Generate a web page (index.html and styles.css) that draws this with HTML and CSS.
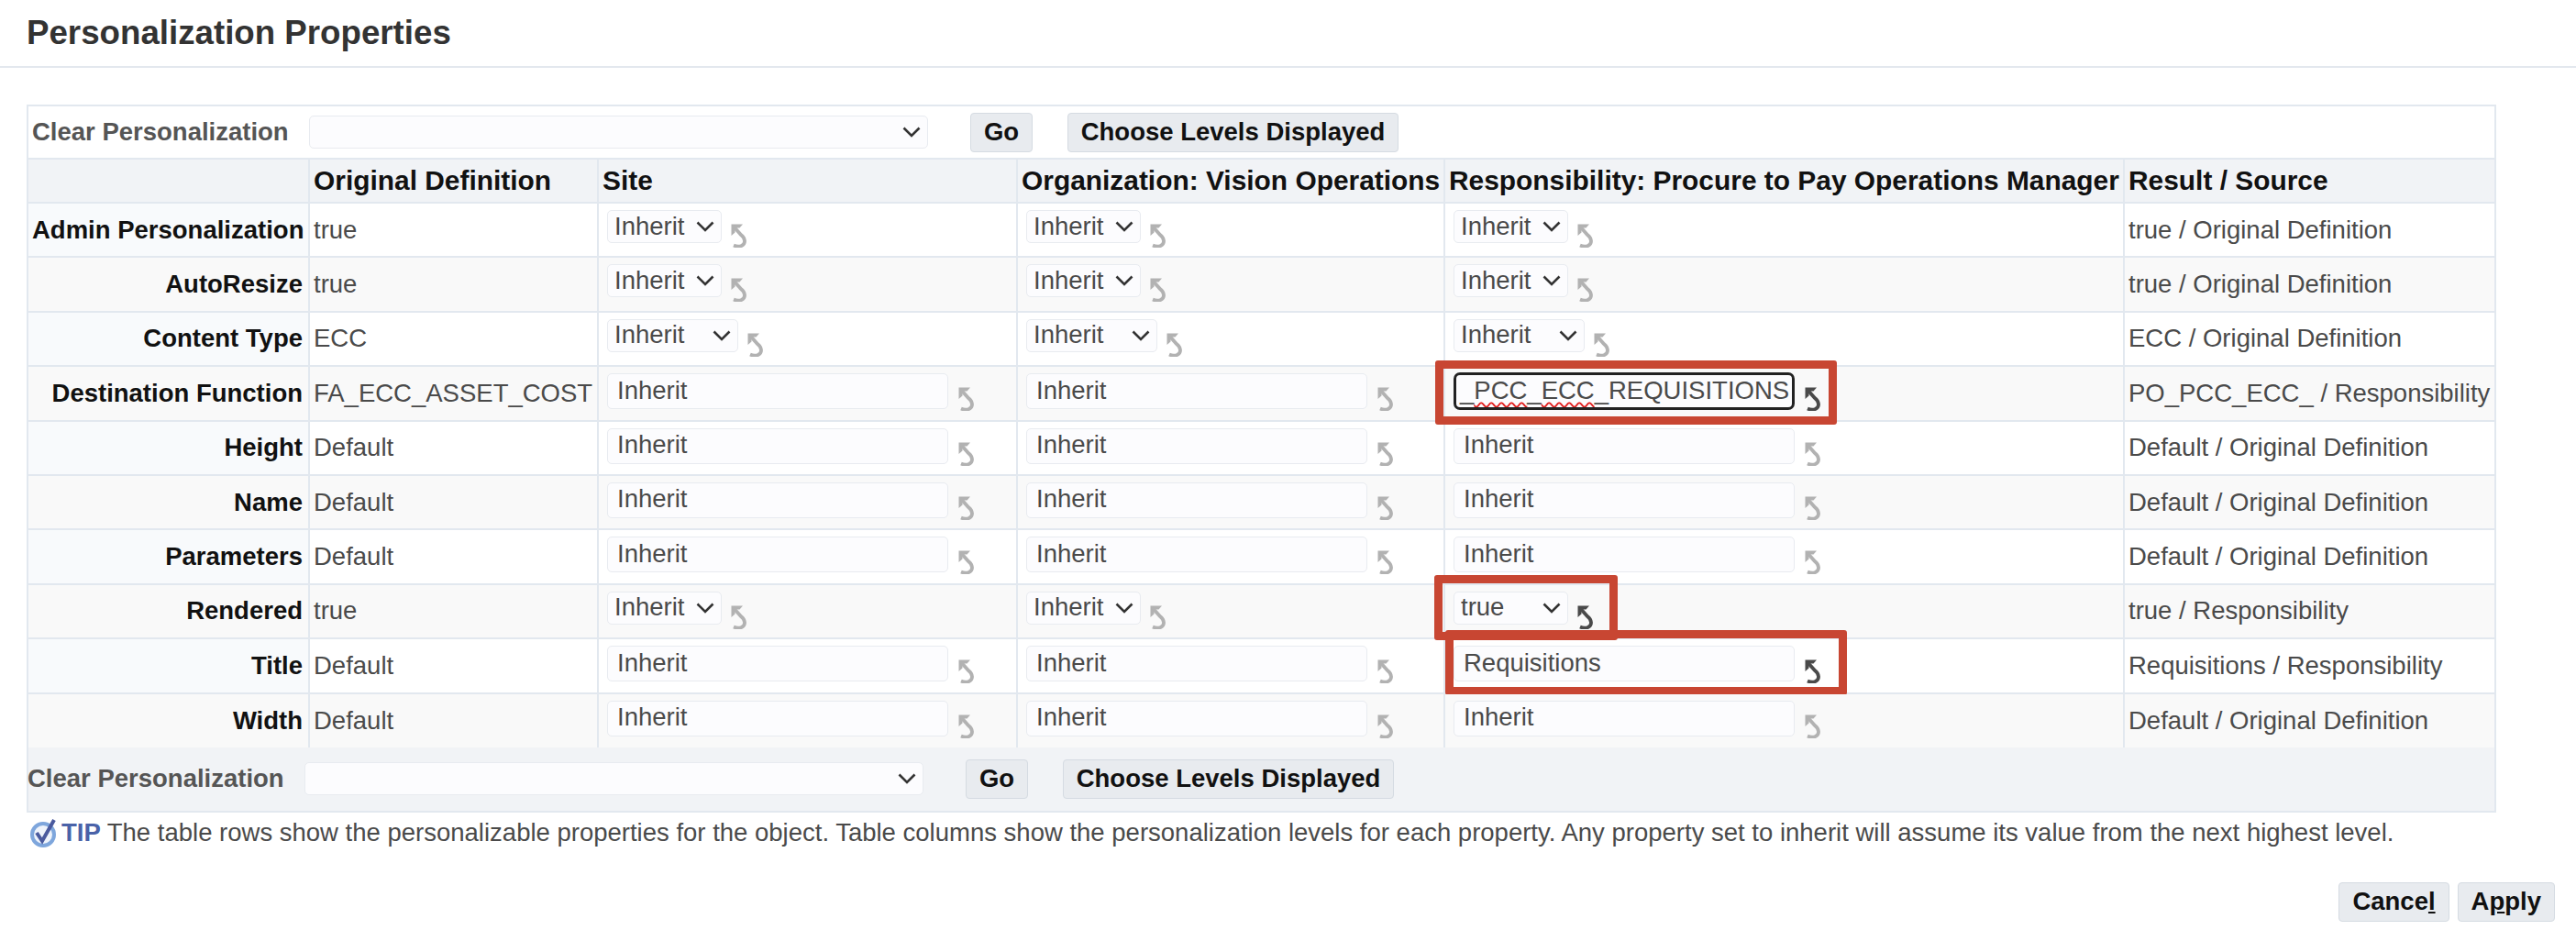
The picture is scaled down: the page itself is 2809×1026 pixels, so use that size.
FILE: index.html
```html
<!DOCTYPE html>
<html lang="en">
  <head>
    <meta charset="UTF-8" />
    <title>Personalization Properties</title>
    <link rel="stylesheet" href="styles.css">
  </head>
  <body>
    <svg class="defs" width="0" height="0">
      <symbol id="undo" viewBox="0 0 17 26">
        <path d="M0.5 0.5H13L9.5 4.5H4.5V9.5L0.5 13Z" />
        <path d="M2.5 2.5L11 12C16 16 16.5 21.5 11.5 24C8.5 25.2 6 24.8 3 23.5" fill="none" stroke="currentColor" stroke-width="3.8" />
      </symbol>
      <symbol id="chevron" viewBox="0 0 20 12">
        <path d="M1.5 1.5L10 10L18.5 1.5" fill="none" stroke="currentColor" stroke-width="2.6" />
      </symbol>
    </svg>

    <h1 class="page-title">Personalization Properties</h1>

    <div class="props">
      <div class="toolbar">
        <span class="clear-label">Clear Personalization</span>
        <span class="select-wrap wide"><select><option></option></select><svg class="chev"><use href="#chevron" /></svg></span>
        <button class="btn go">Go</button>
        <button class="btn choose">Choose Levels Displayed</button>
      </div>

      <table class="grid">
        <colgroup>
          <col class="c1" /><col class="c2" /><col class="c3" /><col class="c4" /><col class="c5" /><col class="c6" />
        </colgroup>
        <thead>
          <tr>
            <th></th>
            <th>Original Definition</th>
            <th>Site</th>
            <th>Organization: Vision Operations</th>
            <th>Responsibility: Procure to Pay Operations Manager</th>
            <th>Result / Source</th>
          </tr>
        </thead>
        <tbody>
          <tr>
            <td class="name">Admin Personalization</td>
            <td>true</td>
            <td class="field"><div class="cell-row"><span class="select-wrap"><select><option>Inherit</option></select><svg class="chev"><use href="#chevron" /></svg></span><svg class="undo"><use href="#undo" /></svg></div></td>
            <td class="field"><div class="cell-row"><span class="select-wrap"><select><option>Inherit</option></select><svg class="chev"><use href="#chevron" /></svg></span><svg class="undo"><use href="#undo" /></svg></div></td>
            <td class="field"><div class="cell-row"><span class="select-wrap"><select><option>Inherit</option></select><svg class="chev"><use href="#chevron" /></svg></span><svg class="undo"><use href="#undo" /></svg></div></td>
            <td>true / Original Definition</td>
          </tr>
          <tr>
            <td class="name">AutoResize</td>
            <td>true</td>
            <td class="field"><div class="cell-row"><span class="select-wrap"><select><option>Inherit</option></select><svg class="chev"><use href="#chevron" /></svg></span><svg class="undo"><use href="#undo" /></svg></div></td>
            <td class="field"><div class="cell-row"><span class="select-wrap"><select><option>Inherit</option></select><svg class="chev"><use href="#chevron" /></svg></span><svg class="undo"><use href="#undo" /></svg></div></td>
            <td class="field"><div class="cell-row"><span class="select-wrap"><select><option>Inherit</option></select><svg class="chev"><use href="#chevron" /></svg></span><svg class="undo"><use href="#undo" /></svg></div></td>
            <td>true / Original Definition</td>
          </tr>
          <tr>
            <td class="name">Content Type</td>
            <td>ECC</td>
            <td class="field"><div class="cell-row"><span class="select-wrap mid"><select><option>Inherit</option></select><svg class="chev"><use href="#chevron" /></svg></span><svg class="undo"><use href="#undo" /></svg></div></td>
            <td class="field"><div class="cell-row"><span class="select-wrap mid"><select><option>Inherit</option></select><svg class="chev"><use href="#chevron" /></svg></span><svg class="undo"><use href="#undo" /></svg></div></td>
            <td class="field"><div class="cell-row"><span class="select-wrap mid"><select><option>Inherit</option></select><svg class="chev"><use href="#chevron" /></svg></span><svg class="undo"><use href="#undo" /></svg></div></td>
            <td>ECC / Original Definition</td>
          </tr>
          <tr>
            <td class="name">Destination Function</td>
            <td>FA_ECC_ASSET_COST</td>
            <td class="field"><div class="cell-row"><input class="text-in" value="Inherit" /><svg class="undo"><use href="#undo" /></svg></div></td>
            <td class="field"><div class="cell-row"><input class="text-in" value="Inherit" /><svg class="undo"><use href="#undo" /></svg></div></td>
            <td class="field">
              <div class="cell-row">
                <div class="text-in focused">_<span class="spell">PCC</span>_<span class="spell">ECC</span>_REQUISITIONS</div><svg class="undo dark"><use href="#undo" /></svg>
              </div>
              <div class="callout callout-dest"></div>
            </td>
            <td>PO_PCC_ECC_ / Responsibility</td>
          </tr>
          <tr>
            <td class="name">Height</td>
            <td>Default</td>
            <td class="field"><div class="cell-row"><input class="text-in" value="Inherit" /><svg class="undo"><use href="#undo" /></svg></div></td>
            <td class="field"><div class="cell-row"><input class="text-in" value="Inherit" /><svg class="undo"><use href="#undo" /></svg></div></td>
            <td class="field"><div class="cell-row"><input class="text-in" value="Inherit" /><svg class="undo"><use href="#undo" /></svg></div></td>
            <td>Default / Original Definition</td>
          </tr>
          <tr>
            <td class="name">Name</td>
            <td>Default</td>
            <td class="field"><div class="cell-row"><input class="text-in" value="Inherit" /><svg class="undo"><use href="#undo" /></svg></div></td>
            <td class="field"><div class="cell-row"><input class="text-in" value="Inherit" /><svg class="undo"><use href="#undo" /></svg></div></td>
            <td class="field"><div class="cell-row"><input class="text-in" value="Inherit" /><svg class="undo"><use href="#undo" /></svg></div></td>
            <td>Default / Original Definition</td>
          </tr>
          <tr>
            <td class="name">Parameters</td>
            <td>Default</td>
            <td class="field"><div class="cell-row"><input class="text-in" value="Inherit" /><svg class="undo"><use href="#undo" /></svg></div></td>
            <td class="field"><div class="cell-row"><input class="text-in" value="Inherit" /><svg class="undo"><use href="#undo" /></svg></div></td>
            <td class="field"><div class="cell-row"><input class="text-in" value="Inherit" /><svg class="undo"><use href="#undo" /></svg></div></td>
            <td>Default / Original Definition</td>
          </tr>
          <tr>
            <td class="name">Rendered</td>
            <td>true</td>
            <td class="field"><div class="cell-row"><span class="select-wrap"><select><option>Inherit</option></select><svg class="chev"><use href="#chevron" /></svg></span><svg class="undo"><use href="#undo" /></svg></div></td>
            <td class="field"><div class="cell-row"><span class="select-wrap"><select><option>Inherit</option></select><svg class="chev"><use href="#chevron" /></svg></span><svg class="undo"><use href="#undo" /></svg></div></td>
            <td class="field">
              <div class="cell-row"><span class="select-wrap"><select><option>true</option></select><svg class="chev"><use href="#chevron" /></svg></span><svg class="undo dark"><use href="#undo" /></svg></div>
              <div class="callout callout-rendered"></div>
            </td>
            <td>true / Responsibility</td>
          </tr>
          <tr>
            <td class="name">Title</td>
            <td>Default</td>
            <td class="field"><div class="cell-row"><input class="text-in" value="Inherit" /><svg class="undo"><use href="#undo" /></svg></div></td>
            <td class="field"><div class="cell-row"><input class="text-in" value="Inherit" /><svg class="undo"><use href="#undo" /></svg></div></td>
            <td class="field">
              <div class="cell-row"><input class="text-in" value="Requisitions" /><svg class="undo dark"><use href="#undo" /></svg></div>
              <div class="callout callout-title"></div>
            </td>
            <td>Requisitions / Responsibility</td>
          </tr>
          <tr>
            <td class="name">Width</td>
            <td>Default</td>
            <td class="field"><div class="cell-row"><input class="text-in" value="Inherit" /><svg class="undo"><use href="#undo" /></svg></div></td>
            <td class="field"><div class="cell-row"><input class="text-in" value="Inherit" /><svg class="undo"><use href="#undo" /></svg></div></td>
            <td class="field"><div class="cell-row"><input class="text-in" value="Inherit" /><svg class="undo"><use href="#undo" /></svg></div></td>
            <td>Default / Original Definition</td>
          </tr>
        </tbody>
      </table>

      <div class="toolbar bottom">
        <span class="clear-label">Clear Personalization</span>
        <span class="select-wrap wide"><select><option></option></select><svg class="chev"><use href="#chevron" /></svg></span>
        <button class="btn go">Go</button>
        <button class="btn choose">Choose Levels Displayed</button>
      </div>
    </div>

    <p class="tip">
      <svg class="tip-icon" viewBox="0 0 32 32">
        <circle cx="15" cy="18" r="12" fill="#eef3fb" stroke="#7ea6dc" stroke-width="4" />
        <path d="M8 16L14 25L27 2" fill="none" stroke="#4a5a9e" stroke-width="4" />
      </svg>
      <b class="tip-word">TIP</b>
      <span>The table rows show the personalizable properties for the object. Table columns show the personalization levels for each property. Any property set to inherit will assume its value from the next highest level.</span>
    </p>

    <div class="actions">
      <button class="btn">Cance<u>l</u></button>
      <button class="btn">A<u>p</u>ply</button>
    </div>
  </body>
</html>
```

FILE: styles.css
```css
body {
  margin: 0;
  background-color: #fff;
  font-family: "Liberation Sans", Arial, sans-serif;
  font-size: 27.5px;
  color: #4a4a4a;
}

.defs {
  position: absolute;
}

.page-title {
  margin: 0 0 40px;
  padding: 14px 0 12px 29px;
  height: 46px;
  border-bottom: 2px solid #e3e8ee;
  font-size: 36.7px;
  line-height: 44px;
  color: #333;
}

.props {
  width: 2689px;
  margin-left: 29px;
  border: 2px solid #e2e8ef;
}

.toolbar {
  display: flex;
  align-items: center;
  height: 56px;
  padding-left: 4px;
}

.toolbar.bottom {
  height: 69px;
  padding-left: 0;
  background-color: #f1f3f6;
}

.clear-label {
  width: 302px;
  font-weight: bold;
  color: #555;
}

.bottom .clear-label {
  width: 302px;
  margin-left: -1px;
}

.btn {
  height: 43px;
  padding: 0 14px;
  border: 1px solid #d5dbe2;
  border-radius: 4px;
  background-color: #e8ebef;
  font-family: inherit;
  font-size: 27.5px;
  font-weight: bold;
  color: #111;
}

.go {
  width: 68px;
  margin-left: 46px;
  padding: 0;
}

.choose {
  width: 361px;
  margin-left: 38px;
  padding: 0;
}

.bottom .choose {
  margin-left: 38px;
}

.grid {
  width: 100%;
  table-layout: fixed;
  border-collapse: collapse;
}

.c1 { width: 306px; }
.c2 { width: 315px; }
.c3 { width: 457px; }
.c4 { width: 466px; }
.c5 { width: 741px; }

.grid th,
.grid td {
  padding: 0 5px 0 4px;
  border-top: 2px solid #e2e8ef;
  border-left: 2px solid #e2e8ef;
  white-space: nowrap;
}

.grid th:first-child,
.grid td:first-child {
  border-left: none;
}

.grid th {
  height: 46px;
  background-color: #f1f3f6;
  text-align: left;
  font-size: 29.9px;
  color: #111;
}

.grid tbody tr {
  height: 59.4px;
}

.grid tbody tr:nth-child(even) td {
  background-color: #f9f9f9;
}

.grid td.name {
  padding-right: 6px;
  background-color: #f8fafc;
  text-align: right;
  font-weight: bold;
  color: #111;
}

.grid td.field {
  position: relative;
  padding: 7px 0 0 9px;
  vertical-align: top;
}

.cell-row {
  display: flex;
  align-items: flex-start;
  height: 50px;
}

.select-wrap {
  position: relative;
  display: inline-block;
  width: 125px;
  height: 36px;
  flex: none;
}

.select-wrap.mid {
  width: 143px;
}

.select-wrap.wide {
  width: 675px;
}

.select-wrap select {
  width: 100%;
  height: 100%;
  padding: 0 0 2px 7px;
  appearance: none;
  border: 1px solid #e8ebf0;
  border-radius: 5px;
  background-color: #fcfcfe;
  font-family: inherit;
  font-size: 27.5px;
  color: #4a4a4a;
}

.chev {
  position: absolute;
  right: 8px;
  top: 12px;
  width: 20px;
  height: 12px;
  color: #333;
}

.text-in {
  box-sizing: border-box;
  width: 372px;
  height: 39px;
  padding: 0 10px 2px;
  flex: none;
  border: 1px solid #e8ebf0;
  border-radius: 5px;
  background-color: #fcfcfe;
  font-family: inherit;
  font-size: 27.5px;
  line-height: 34px;
  color: #4a4a4a;
}

.text-in.focused {
  height: 41px;
  margin-top: -1px;
  padding: 0 0 0 4px;
  border: 3px solid #222;
  border-radius: 7px;
  overflow: hidden;
}

.spell {
  text-decoration: underline wavy #e02020 2px;
  text-underline-offset: 3px;
}

.undo {
  flex: none;
  width: 17px;
  height: 26px;
  margin: 15px 0 0 11px;
  fill: #b2b2b2;
  color: #b2b2b2;
}

.select-wrap + .undo {
  margin-left: 10px;
}

.undo.dark {
  fill: #4a4a4a;
  color: #4a4a4a;
}

.callout {
  position: absolute;
  border: 9px solid #c84632;
  border-radius: 3px;
  pointer-events: none;
}

.callout-dest {
  left: -11px;
  top: -7px;
  width: 420px;
  height: 52px;
}

.callout-rendered {
  left: -12px;
  top: -11px;
  width: 182px;
  height: 53px;
}

.callout-title {
  left: 0;
  top: -10px;
  width: 420px;
  height: 53px;
}

.tip {
  display: flex;
  align-items: center;
  gap: 3px;
  margin: 5px 0 0 32px;
  height: 34px;
}

.tip-icon {
  width: 32px;
  height: 32px;
}

.tip-word {
  margin-right: 4px;
  color: #4a62a8;
}

.actions {
  display: flex;
  justify-content: flex-end;
  gap: 9px;
  margin-top: 37px;
  padding-right: 23px;
}
```
